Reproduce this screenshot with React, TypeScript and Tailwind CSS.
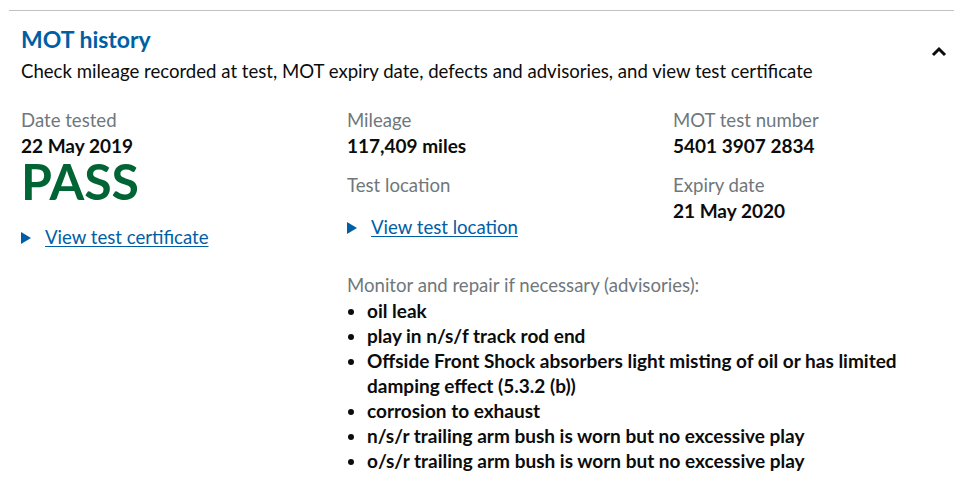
import React from 'react';

const advisories = [
    'oil leak',
    'play in n/s/f track rod end',
    'Offside Front Shock absorbers light misting of oil or has limited damping effect (5.3.2 (b))',
    'corrosion to exhaust',
    'n/s/r trailing arm bush is worn but no excessive play',
    'o/s/r trailing arm bush is worn but no excessive play'
];

const Label: React.FC<{ children: React.ReactNode }> = ({ children }) => (
    <div className="text-[#6f777b] leading-[25px]">{children}</div>
);

const Value: React.FC<{ children: React.ReactNode }> = ({ children }) => (
    <div className="font-bold text-[19px] text-[#0b0c0c] leading-[25px]">{children}</div>
);

const LinkItem: React.FC<{ children: React.ReactNode }> = ({ children }) => (
    <div className="flex items-center leading-[25px]">
        <span className="inline-block w-0 h-0 border-y-[6px] border-y-transparent border-l-[10px] border-l-[#005ea5] mr-[14px]" />
        <a href="#" className="text-[#005ea5] underline underline-offset-2">{children}</a>
    </div>
);

const App: React.FC = () => {
    return (
        <div className="w-[954px] h-[492px] bg-white overflow-hidden text-[18.6px] text-[#0b0c0c]" style={{ fontFamily: 'Lato, "Liberation Sans", sans-serif' }}>
            <div className="ml-[9px] mt-[10px] border-t border-[#bfc1c3]">
                <div className="pl-[12px] pt-[13px] flex justify-between">
                    <div>
                        <h2 className="text-[23px] font-bold text-[#005ea5] leading-[30px]">MOT history</h2>
                        <p className="mt-[5px] leading-[25px]">Check mileage recorded at test, MOT expiry date, defects and advisories, and view test certificate</p>
                    </div>
                    <svg width="16" height="12" viewBox="0 0 16 12" className="mt-[21px] mr-[7px]">
                        <path d="M2 10 L8 4 L14 10" fill="none" stroke="#0b0c0c" strokeWidth="3" />
                    </svg>
                </div>

                <div className="pl-[12px] mt-[24px] grid grid-cols-[326px_326px_1fr]">
                    <div>
                        <Label>Date tested</Label>
                        <Value>22 May 2019</Value>
                        <div className="text-[50px] font-bold text-[#006435] leading-[44px] mt-[1px]">PASS</div>
                        <div className="mt-[22px]">
                            <LinkItem>View test certificate</LinkItem>
                        </div>
                    </div>
                    <div>
                        <Label>Mileage</Label>
                        <Value>117,409 miles</Value>
                        <div className="mt-[15px]">
                            <Label>Test location</Label>
                        </div>
                        <div className="mt-[17px]">
                            <LinkItem>View test location</LinkItem>
                        </div>
                        <div className="mt-[33px] w-[580px]">
                            <Label>Monitor and repair if necessary (advisories):</Label>
                            <ul className="list-disc pl-[20px] font-bold text-[19px] leading-[25px]">
                                {advisories.map((a) => (
                                    <li key={a}>{a}</li>
                                ))}
                            </ul>
                        </div>
                    </div>
                    <div>
                        <Label>MOT test number</Label>
                        <Value>5401 3907 2834</Value>
                        <div className="mt-[15px]">
                            <Label>Expiry date</Label>
                        </div>
                        <Value>21 May 2020</Value>
                    </div>
                </div>
            </div>
        </div>
    );
};

export default App;
